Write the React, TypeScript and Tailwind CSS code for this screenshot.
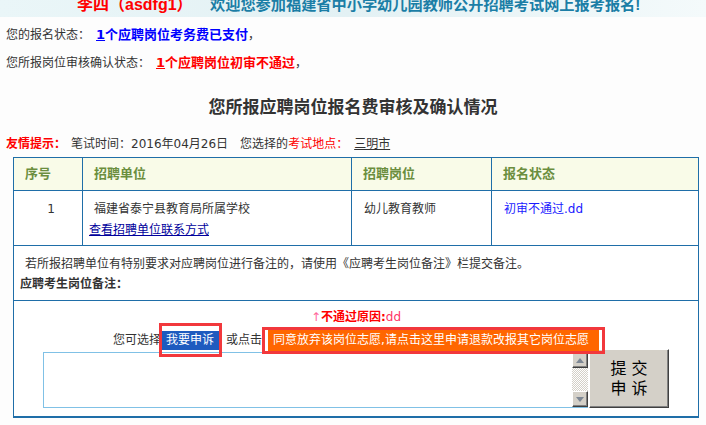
import React from 'react';

const cell = 'border border-[#1f6ea8] align-top';

const ScrollArrow: React.FC<{ up?: boolean }> = ({ up }) => (
  <div className="flex h-[16px] w-[16px] items-center justify-center border border-t-white border-l-white border-r-[#404040] border-b-[#404040] bg-[#d4d0c8] shadow-[inset_-1px_-1px_0_#808080]">
    <svg width="8" height="5" viewBox="0 0 8 5">
      {up ? <polygon points="0,5 8,5 4,0" fill="#7d8794" /> : <polygon points="0,0 8,0 4,5" fill="#7d8794" />}
    </svg>
  </div>
);

export default function App() {
  return (
    <div className="min-h-screen w-[706px] bg-[#fdfdfd] text-[12px] text-[#333] font-['DejaVu_Sans','Noto_Sans_CJK_SC',sans-serif]">
      {/* welcome band, its top is cut off in the page */}
      <div className="h-[17px] overflow-hidden bg-linear-to-r from-[#eaf6f8] via-[#e3f1f4] to-[#f4fafb]">
        <div className="-mt-[3px] flex whitespace-nowrap pl-[77px] text-[16px] font-bold leading-[16px] font-['Liberation_Sans','Noto_Sans_CJK_SC',sans-serif]">
          <span className="w-[106px] text-[#ff0000]">李四（asdfg1）</span>
          <span className="ml-[27px] text-[15.2px] text-[#1b7ea6]">欢迎您参加福建省中小学幼儿园教师公开招聘考试网上报考报名!</span>
        </div>
      </div>

      <div className="flex h-[32px] items-center whitespace-nowrap pl-[6px] pt-[3px]">
        <span>您的报名状态：</span>
        <span className="ml-[6px] text-[13px] font-bold text-[#0000ff]">
          <span className="underline">1</span>个应聘岗位考务费已支付
        </span>
        <span>，</span>
      </div>
      <div className="flex h-[26px] items-center whitespace-nowrap pl-[6px] pt-[1px]">
        <span>您所报岗位审核确认状态：</span>
        <span className="ml-[6px] text-[13px] font-bold text-[#ff0000]">
          <span className="underline">1</span>个应聘岗位初审不通过
        </span>
        <span>，</span>
      </div>

      <div className="flex h-[62px] items-center justify-center pt-[3px] text-[17px] font-bold text-[#333]">
        您所报应聘岗位报名费审核及确认情况
      </div>

      <div className="flex h-[14px] items-center whitespace-nowrap pl-[6px] leading-[14px]">
        <span className="font-bold text-[#ff0000]">友情提示：</span>
        <span className="ml-[5px]">笔试时间：2016年04月26日</span>
        <span className="ml-[12px]">您选择的</span>
        <span className="text-[#ff0000]">考试地点：</span>
        <span className="ml-[6px] underline">三明市</span>
      </div>

      <table className="ml-[13px] mt-[6px] w-[686px] table-fixed border-collapse bg-white">
        <colgroup>
          <col className="w-[69px]" />
          <col className="w-[269px]" />
          <col className="w-[140px]" />
          <col />
        </colgroup>
        <thead>
          <tr className="h-[33px] bg-[#f9fbe8] text-left text-[13px] font-bold text-[#6b8e3e]">
            <th className="border border-[#1f6ea8] pl-[11px]">序号</th>
            <th className="border border-[#1f6ea8] pl-[11px]">招聘单位</th>
            <th className="border border-[#1f6ea8] pl-[11px]">招聘岗位</th>
            <th className="border border-[#1f6ea8] pl-[11px]">报名状态</th>
          </tr>
        </thead>
        <tbody>
          <tr className="h-[55px]">
            <td className={`${cell} pt-[8px] pl-[6px] text-center leading-[21px]`}>1</td>
            <td className={`${cell} pt-[8px] pl-[6px] leading-[21px]`}>
              <div className="pl-[5px]">福建省泰宁县教育局所属学校</div>
              <div className="text-[#00009c] underline">查看招聘单位联系方式</div>
            </td>
            <td className={`${cell} pt-[8px] pl-[12px] leading-[21px]`}>幼儿教育教师</td>
            <td className={`${cell} pt-[8px] pl-[12px] leading-[21px] text-[#1a1aff]`}>初审不通过.dd</td>
          </tr>
          <tr className="h-[55px]">
            <td colSpan={4} className={`${cell} pt-[8px] pl-[6px] leading-[20px]`}>
              <div className="pl-[5px]">若所报招聘单位有特别要求对应聘岗位进行备注的，请使用《应聘考生岗位备注》栏提交备注。</div>
              <div className="font-bold">应聘考生岗位备注：</div>
            </td>
          </tr>
          <tr>
            <td colSpan={4} className={`${cell} border-b-2 pt-[9px] pb-[8px]`}>
              <div className="flex h-[14px] items-center justify-center leading-[14px]">
                <span className="text-[#ff6699]">↑</span>
                <span className="font-bold text-[#ff0000]">不通过原因:</span>
                <span className="text-[#ff3366]">dd</span>
              </div>

              <div className="mt-[5px] flex h-[22px] items-center justify-center whitespace-nowrap">
                <span>您可选择</span>
                <span className="relative h-[19px] bg-[#1e5bbf] px-[5px] leading-[19px] text-white">
                  我要申诉
                  <span className="absolute -top-[8px] -bottom-[7px] -left-[2px] -right-[3px] border-[3px] border-[#f2383c]" />
                </span>
                <span className="ml-[7px]">或点击</span>
                <span className="relative ml-[6px] h-[21px] bg-[#ff6600] pl-[5px] pr-[10px] leading-[21px] text-white">
                  同意放弃该岗位志愿,请点击这里申请退款改报其它岗位志愿
                  <span className="absolute -top-[3px] -bottom-[3px] -left-[6px] -right-[6px] border-[3px] border-[#f2383c]" />
                </span>
              </div>

              <div className="-mt-[2px] flex items-end justify-center">
                <div className="flex h-[56px]">
                  <textarea className="h-[56px] w-[529px] resize-none border border-r-0 border-[#80c1e6] bg-white outline-none" />
                  <div className="flex w-[16px] flex-col border-b border-[#80c1e6]">
                    <ScrollArrow up />
                    <div className="flex-1 bg-[repeating-conic-gradient(#d4d0c8_0_25%,#ffffff_0_50%)] bg-[length:2px_2px]" />
                    <ScrollArrow />
                  </div>
                </div>
                <button className="ml-[1px] h-[59px] w-[80px] border border-t-white border-l-white border-r-[#404040] border-b-[#404040] bg-[#d4d0c8] text-[16px] leading-[20px] text-black shadow-[inset_-1px_-1px_0_#808080]">
                  提 交
                  <br />
                  申 诉
                </button>
              </div>
            </td>
          </tr>
        </tbody>
      </table>
    </div>
  );
}
